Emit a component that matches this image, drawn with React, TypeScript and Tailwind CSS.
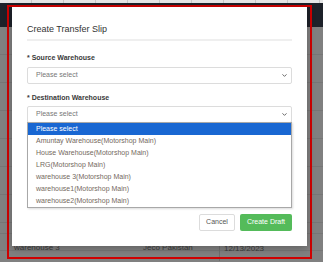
import { ChevronDown } from "lucide-react"

const options = [
  "Amuntay Warehouse(Motorshop Main)",
  "House Warehouse(Motorshop Main)",
  "LRG(Motorshop Main)",
  "warehouse 3(Motorshop Main)",
  "warehouse1(Motorshop Main)",
  "warehouse2(Motorshop Main)",
]

function SelectBox() {
  return (
    <div className="flex h-[17px] items-center justify-between rounded-[2px] border border-[#dcdcdc] bg-white pl-[8px] pr-[3px]">
      <span className="text-[7px] text-[#777]">Please select</span>
      <ChevronDown className="h-[7px] w-[7px] text-[#555]" strokeWidth={3} />
    </div>
  )
}

export default function App() {
  return (
    <div className="relative h-[262px] w-[323px] overflow-hidden bg-[#808080] font-['Liberation_Sans',Arial,sans-serif]">
      {/* background table */}
      <div className="flex h-[3px] bg-[#e6e6e6]">
        {Array.from({ length: 10 }).map((_, i) => (
          <div key={i} className="w-[32px] shrink-0 border-r border-[#c8c8c8]" />
        ))}
      </div>
      <div className="h-[24px] bg-[#1d2129]" />
      <div className="flex flex-col">
        {Array.from({ length: 8 }).map((_, i) => (
          <div key={i} className="h-[28px] border-b border-[#767676]" />
        ))}
      </div>
      <div className="absolute left-0 top-[233px] flex h-[28px] w-full items-center border-t border-[#767676] text-[8px] text-[#3c3c3c]">
        <span className="w-[143px] pl-[14px]">warehouse 3</span>
        <span className="w-[76px]">Jeco Pakistan</span>
        <span className="h-full border-l border-[#6e6e6e] pl-[4px] pt-[9px]">12/13/2023</span>
      </div>

      {/* highlight frame */}
      <div className="absolute left-[7px] top-[5px] h-[254px] w-[305px] border-2 border-[#d00000]" />

      {/* modal */}
      <div className="absolute left-[12px] top-[7px] flex h-[239px] w-[295px] flex-col bg-white px-[15px] shadow-[0_2px_8px_rgba(0,0,0,0.25)]">
        <div className="flex h-[31px] items-end pb-[2px] text-[9px] text-[#333]">
          Create Transfer Slip
        </div>
        <div className="mt-[1px] h-[2px] bg-[#efefef]" />

        <div className="mt-[12px] text-[7px] font-bold text-[#3a3a3a]">* Source Warehouse</div>
        <div className="mt-[3px]">
          <SelectBox />
        </div>

        <div className="mt-[9px] text-[7px] font-bold text-[#3a3a3a]">* Destination Warehouse</div>
        <div className="relative mt-[3px]">
          <SelectBox />
          <div className="absolute left-0 top-[16px] z-10 w-full border border-[#a8a8a8] bg-white shadow-[1px_1px_2px_rgba(0,0,0,0.15)]">
            <div className="flex h-[12px] items-center bg-[#1967d2] pl-[8px] text-[7px] text-white">
              Please select
            </div>
            {options.map((o) => (
              <div key={o} className="flex h-[12px] items-center pl-[8px] text-[7px] text-[#74695e]">
                {o}
              </div>
            ))}
          </div>
        </div>

        <div className="mt-auto mb-[15px] flex justify-end gap-[5px]">
          <button className="h-[17px] w-[36px] rounded-[2px] border border-[#dcdcdc] bg-white text-[7px] text-[#555]">
            Cancel
          </button>
          <button className="h-[17px] w-[52px] rounded-[2px] bg-[#54bb5a] text-[7px] text-white">
            Create Draft
          </button>
        </div>
      </div>
    </div>
  )
}
